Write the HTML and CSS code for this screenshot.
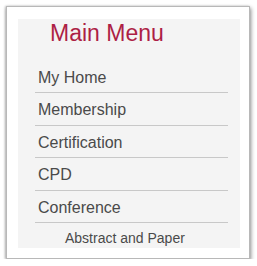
FILE: index.html
```html
<!DOCTYPE html>
<html lang="en">

<head>
  <meta charset="UTF-8">
  <meta name="viewport" content="width=device-width, initial-scale=1.0">
  <title>Main Menu</title>
  <link rel="stylesheet" href="styles.css">
</head>

<body>
  <div class="frame">
    <div class="panel">
      <h2 class="title">Main Menu</h2>
      <ul class="menu">
        <li>My Home</li>
        <li>Membership</li>
        <li>Certification</li>
        <li>CPD</li>
        <li>Conference</li>
        <li class="sub">Abstract and Paper</li>
      </ul>
    </div>
  </div>
</body>

</html>
```

FILE: styles.css
```css
body {
  margin: 0;
  background-color: #fff;
  font-family: "Liberation Sans", Arial, sans-serif;
}

.frame {
  box-sizing: border-box;
  width: 244px;
  height: 253px;
  margin: 6px 0 0 6px;
  padding: 12px 9px 11px 11px;
  border: 1px solid #b8b8b8;
  background-color: #fff;
  box-shadow: 1px 2px 4px rgba(0, 0, 0, 0.45), -1px 0 2px rgba(0, 0, 0, 0.2);
}

.panel {
  height: 228px;
  padding-top: 1px;
  background-color: #f4f4f4;
}

.title {
  margin: 0 0 14.5px;
  padding-left: 32px;
  font-size: 23px;
  line-height: 26px;
  font-weight: normal;
  color: #ad1f45;
}

.menu {
  list-style: none;
  margin: 0 12px 0 17px;
  padding: 0;
}

.menu li {
  padding: 8px 0 5.5px 3px;
  font-size: 16px;
  line-height: 18px;
  color: #4a4a4a;
  border-bottom: 1px solid #c8c8c8;
}

.menu li.sub {
  padding-left: 30px;
  padding-top: 6px;
  font-size: 14px;
  border-bottom: none;
}
```
